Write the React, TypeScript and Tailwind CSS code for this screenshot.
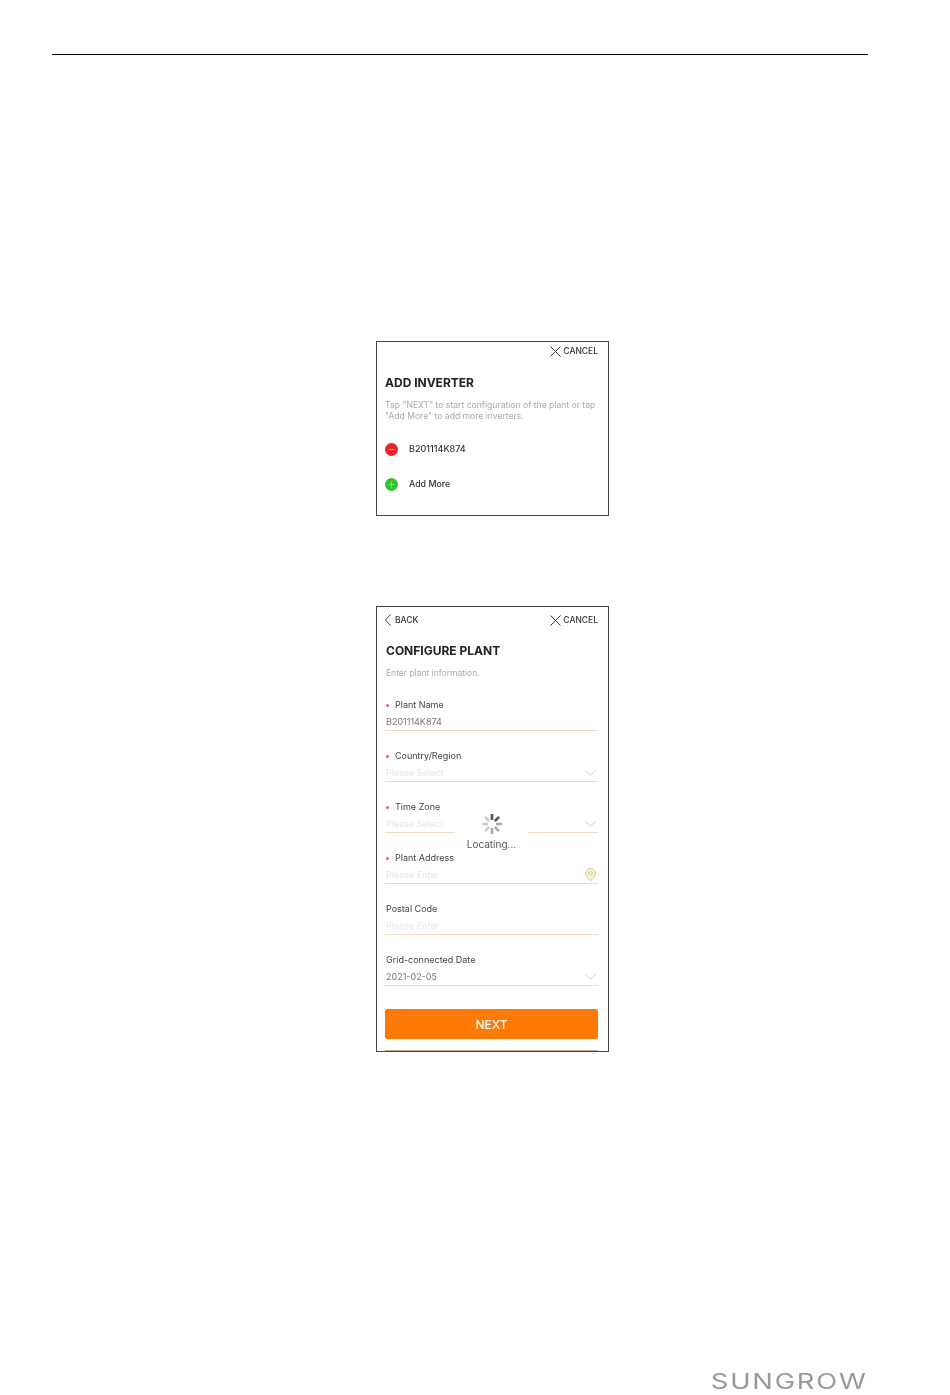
import { MapPin, Minus, Plus } from 'lucide-react'

interface FieldProps {
  label: string
  value: string
  required?: boolean
  placeholder?: boolean
  icon?: 'chevron' | 'pin'
}

const fields: FieldProps[] = [
  { label: 'Plant Name', value: 'B201114K874', required: true },
  { label: 'Country/Region', value: 'Please Select', required: true, placeholder: true, icon: 'chevron' },
  { label: 'Time Zone', value: 'Please Select', required: true, placeholder: true, icon: 'chevron' },
  { label: 'Plant Address', value: 'Please Enter', required: true, placeholder: true, icon: 'pin' },
  { label: 'Postal Code', value: 'Please Enter', placeholder: true },
  { label: 'Grid-connected Date', value: '2021-02-05', icon: 'chevron' },
]

function CancelLink() {
  return (
    <div className="flex items-center justify-end gap-[2px] text-[8.5px] leading-[12px] font-medium text-[#333]">
      <svg width="11" height="11" viewBox="0 0 11 11" fill="none" stroke="#222" strokeWidth="0.9">
        <path d="M0.5 0.5L10.5 10.5M10.5 0.5L0.5 10.5" />
      </svg>
      <span>CANCEL</span>
    </div>
  )
}

function Field({ label, value, required, placeholder, icon }: FieldProps) {
  return (
    <div className="flex h-[51px] flex-col">
      <div className="flex h-[14px] items-center text-[9px] text-[#444]">
        {required && <span className="mr-[6px] ml-px h-[3px] w-[3px] rounded-full bg-[#e8606e]" />}
        <span className={required ? '' : 'pl-px'}>{label}</span>
      </div>
      <div className="mt-px flex h-[18px] items-center justify-between border-b border-[#ecdcc4]">
        <span className={`pl-px text-[9px] ${placeholder ? 'text-[#e6e6ea]' : 'text-[#777]'}`}>{value}</span>
        {icon === 'chevron' && (
          <svg width="11" height="6" viewBox="0 0 11 6" fill="none" stroke="#d8cfae" strokeWidth="1" className="mr-[2px]">
            <path d="M0.5 0.5L5.5 5.2L10.5 0.5" />
          </svg>
        )}
        {icon === 'pin' && <MapPin size={15} strokeWidth={1.3} className="fill-[#f6f2d8] text-[#d6c98a]" />}
      </div>
    </div>
  )
}

function Spinner() {
  const spokes = [0, 45, 90, 135, 180, 225, 270, 315]
  return (
    <svg width="24" height="24" viewBox="0 0 24 24" fill="none">
      {spokes.map((deg, i) => (
        <line
          key={deg}
          x1="12"
          y1="2"
          x2="12"
          y2="8"
          stroke={i < 2 ? '#555' : i < 5 ? '#aaa' : '#ccc'}
          strokeWidth="2.6"
          transform={`rotate(${deg} 12 12)`}
        />
      ))}
    </svg>
  )
}

function AddInverterCard() {
  return (
    <section className="h-[175px] w-[233px] border border-[#444] bg-white px-2 pt-[3px] blur-[0.4px]">
      <div className="pr-[2px]">
        <CancelLink />
      </div>
      <h2 className="mt-[18px] text-[12px] leading-[16px] font-bold text-[#222]">ADD INVERTER</h2>
      <p className="mt-[9px] text-[8.6px] leading-[10.5px] text-[#aaa]">
        Tap "NEXT" to start configuration of the plant or tap
        <br />
        "Add More" to add more inverters.
      </p>
      <div className="mt-[21px] flex h-[14px] items-center gap-[11px] text-[9px] font-medium text-[#333]">
        <span className="flex h-[13px] w-[13px] items-center justify-center rounded-full bg-[#e8232a]">
          <Minus size={9} className="text-[#f5a0a0]" />
        </span>
        <span>B201114K874</span>
      </div>
      <div className="mt-[21px] flex h-[14px] items-center gap-[11px] text-[8.8px] font-medium text-[#333]">
        <span className="flex h-[13px] w-[13px] items-center justify-center rounded-full bg-[#2fc52f]">
          <Plus size={9} className="text-[#a5eaa5]" />
        </span>
        <span>Add More</span>
      </div>
    </section>
  )
}

function ConfigurePlantCard() {
  return (
    <section className="relative mt-[90px] h-[446px] w-[233px] border border-[#444] bg-white pt-[7px] pr-[10px] pl-2 blur-[0.4px]">
      <div className="flex items-center justify-between">
        <div className="flex items-center gap-[4px] text-[8.5px] leading-[12px] font-medium text-[#333]">
          <svg width="6" height="12" viewBox="0 0 6 12" fill="none" stroke="#222" strokeWidth="0.9">
            <path d="M5.5 0.5L0.5 6L5.5 11.5" />
          </svg>
          <span>BACK</span>
        </div>
        <CancelLink />
      </div>
      <h2 className="mt-[17px] pl-px text-[12px] leading-[16px] font-bold text-[#222]">CONFIGURE PLANT</h2>
      <p className="mt-[8px] pl-px text-[8.5px] leading-[12px] text-[#aaa]">Enter plant information.</p>
      <div className="mt-[19px]">
        {fields.map((f) => (
          <Field key={f.label} {...f} />
        ))}
      </div>
      <button className="mt-[5px] block h-[30px] w-full rounded-[2px] bg-[#ff7a05] pt-[2px] text-[12px] font-medium text-white">
        NEXT
      </button>
      <div className="mt-[11px] h-px bg-[#c9a98c]" />
      {/* loading overlay */}
      <div className="absolute top-[201px] left-[78px] flex h-[50px] w-[73px] flex-col items-center bg-white pt-[4px]">
        <Spinner />
        <span className="mt-px text-[10px] leading-[14px] text-[#555]">Locating...</span>
      </div>
    </section>
  )
}

export default function App() {
  return (
    <div className="flex h-[1395px] w-[950px] flex-col overflow-hidden bg-white font-['Inter',sans-serif]">
      <header className="mt-[54px] mr-[82px] ml-[52px] h-px bg-black" />
      <main className="mt-[286px] flex-1 pl-[376px]">
        <AddInverterCard />
        <ConfigurePlantCard />
      </main>
      <footer className="mr-[82px] flex justify-end">
        <span className="origin-right scale-x-[1.3] text-[21px] leading-[26px] font-normal tracking-[1.4px] text-[#999]">
          SUNGROW
        </span>
      </footer>
    </div>
  )
}
